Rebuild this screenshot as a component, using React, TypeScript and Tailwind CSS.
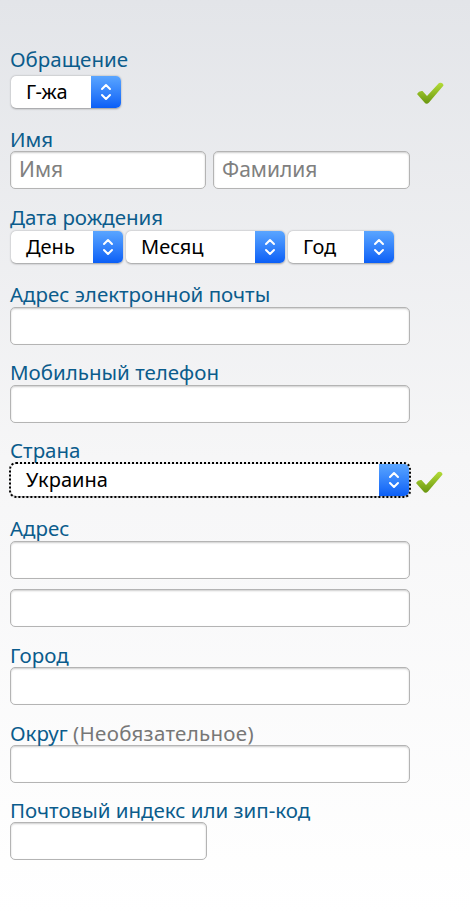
function Check() {
  return (
    <svg width="30" height="26" viewBox="0 0 30 26" className="shrink-0">
      <defs>
        <linearGradient id="ck" x1="0" y1="0" x2="0" y2="1">
          <stop offset="0" stopColor="#b4dc38" />
          <stop offset="1" stopColor="#6a9610" />
        </linearGradient>
      </defs>
      <path
        d="M2 14 Q4 10.5 7.5 11 L12 16 L24 3 Q28 2 28.5 5.5 L14 22.5 Q11.5 25 9.5 22.5 Z"
        fill="url(#ck)"
      />
    </svg>
  );
}

function Arrows() {
  return (
    <div className="flex h-full w-[30px] shrink-0 items-center justify-center rounded-r-[5px] bg-gradient-to-b from-[#5aa5ff] to-[#0a5ef6]">
      <svg width="12" height="18" viewBox="0 0 12 18" fill="none" stroke="white" strokeWidth="2" strokeLinecap="round" strokeLinejoin="round">
        <path d="M2 6 L6 2 L10 6" />
        <path d="M2 12 L6 16 L10 12" />
      </svg>
    </div>
  );
}

function Select({ value, className, focused }: { value: string; className: string; focused?: boolean }) {
  return (
    <div
      className={`flex h-[32px] items-center rounded-[5px] bg-white shadow-[0_0.5px_2px_rgba(0,0,0,0.35)] ${
        focused ? 'outline-2 outline-dotted outline-black' : ''
      } ${className}`}
    >
      <span className="flex-1 pl-[15px] text-[20px] leading-[24px] text-black">{value}</span>
      <Arrows />
    </div>
  );
}

function Input({ placeholder, className = 'w-[400px]' }: { placeholder?: string; className?: string }) {
  return (
    <div
      className={`flex h-[38px] items-center rounded-[5px] border border-[#b4b4b4] bg-white pl-[8px] text-[21px] text-[#808080] shadow-[inset_0_1px_2px_rgba(0,0,0,0.2)] ${className}`}
    >
      {placeholder}
    </div>
  );
}

function Label({ children }: { children: React.ReactNode }) {
  return <div className="text-[20.5px] leading-[22px] text-[#0b5c8c]">{children}</div>;
}

export default function App() {
  return (
    <div
      className="min-h-[914px] w-[470px] bg-gradient-to-b from-[#e3e5e9] via-[#f6f6f7] via-50% to-white pl-[10px] pt-[48px]"
      style={{ fontFamily: '"Noto Sans", "Liberation Sans", Arial, sans-serif' }}
    >
      <Label>Обращение</Label>
      <div className="mt-[6px] flex items-center">
        <Select value="Г-жа" className="ml-[1px] w-[110px]" />
        <div className="ml-[294px] mt-[2px]">
          <Check />
        </div>
      </div>

      <div className="mt-[20px]">
        <Label>Имя</Label>
      </div>
      <div className="mt-[1px] flex gap-[7px]">
        <Input placeholder="Имя" className="w-[196px]" />
        <Input placeholder="Фамилия" className="w-[197px]" />
      </div>

      <div className="mt-[17px]">
        <Label>Дата рождения</Label>
      </div>
      <div className="mt-[3px] flex gap-[3px] pl-[1px]">
        <Select value="День" className="w-[112px]" />
        <Select value="Месяц" className="w-[159px]" />
        <Select value="Год" className="w-[106px]" />
      </div>

      <div className="mt-[20px]">
        <Label>Адрес электронной почты</Label>
      </div>
      <div className="mt-[2px]">
        <Input />
      </div>

      <div className="mt-[16px]">
        <Label>Мобильный телефон</Label>
      </div>
      <div className="mt-[2px]">
        <Input />
      </div>

      <div className="mt-[16px]">
        <Label>Страна</Label>
      </div>
      <div className="mt-[3px] flex items-center">
        <Select value="Украина" className="ml-[1px] w-[398px]" focused />
        <div className="ml-[5px] mt-[4px]">
          <Check />
        </div>
      </div>

      <div className="mt-[21px]">
        <Label>Адрес</Label>
      </div>
      <div className="mt-[2px]">
        <Input />
      </div>
      <div className="mt-[10px]">
        <Input />
      </div>

      <div className="mt-[17px]">
        <Label>Город</Label>
      </div>
      <div className="mt-[1px]">
        <Input />
      </div>

      <div className="mt-[17px]">
        <Label>
          Округ <span className="tracking-[0.3px] text-[#777]">(Необязательное)</span>
        </Label>
      </div>
      <div className="mt-[1px]">
        <Input />
      </div>

      <div className="mt-[16px]">
        <Label>Почтовый индекс или зип-код</Label>
      </div>
      <div className="mt-[1px]">
        <Input className="w-[197px]" />
      </div>
    </div>
  );
}
